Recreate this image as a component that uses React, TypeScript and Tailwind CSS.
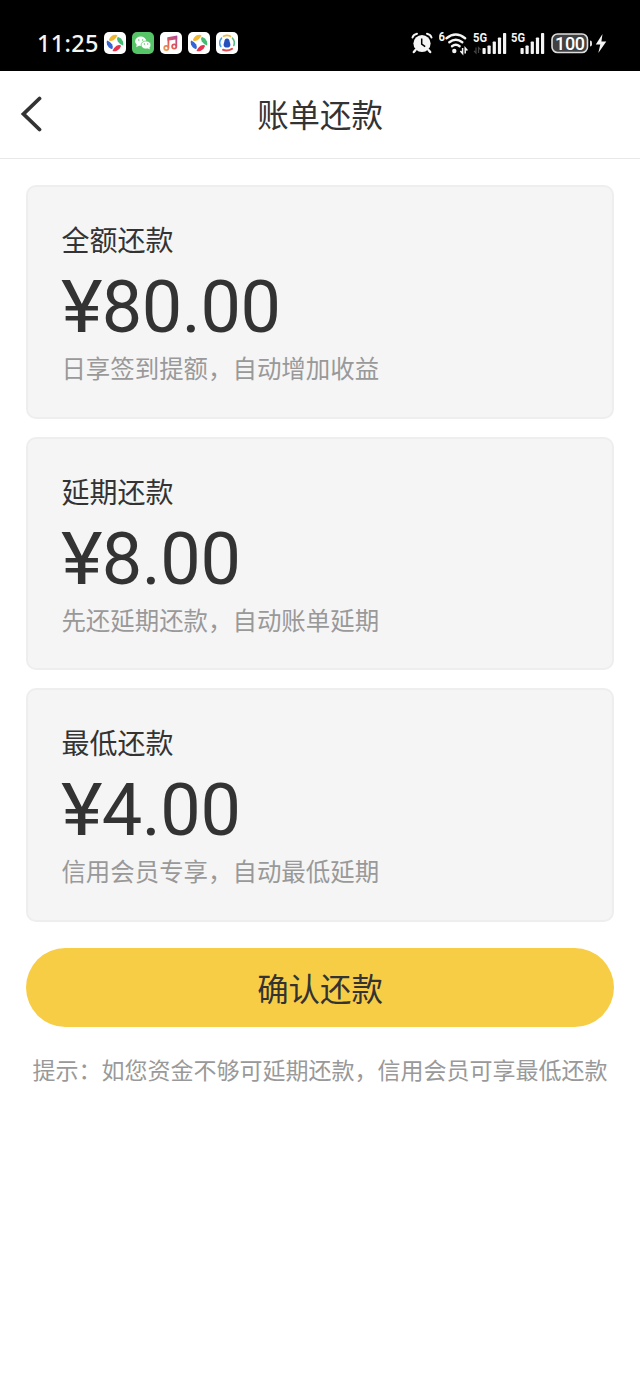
import React from "react";

interface RepayOption {
  title: string;
  amount: string;
  note: string;
}

const options: RepayOption[] = [
  { title: "全额还款", amount: "80.00", note: "日享签到提额，自动增加收益" },
  { title: "延期还款", amount: "8.00", note: "先还延期还款，自动账单延期" },
  { title: "最低还款", amount: "4.00", note: "信用会员专享，自动最低延期" },
];

function PinwheelIcon() {
  return (
    <svg className="h-[22px] w-[22px]" viewBox="0 0 22 22">
      <rect width="22" height="22" rx="5" fill="#fff" />
      <path d="M4.800 8.200Q6 4.300 9.500 3q3-.8 4 .2Q12.500 6 9.500 8.200q-3 1.500-4.700 0z" fill="#f0b62f" />
      <path d="M13.800 4.800Q17.700 6 19 9.500q.8 3-.2 4Q16 12.500 13.800 9.500q-1.500-3 0-4.700z" fill="#43bd72" />
      <path d="M17.200 13.800Q16 17.700 12.500 19q-3 .8-4-.2Q9.500 16 12.500 13.800q3-1.500 4.700 0z" fill="#e3354e" />
      <path d="M8.200 17.200Q4.300 16 3 12.500q-.8-3 .2-4Q6 9.500 8.200 12.500q1.500 3 0 4.700z" fill="#3566d6" />
    </svg>
  );
}

function ChatIcon() {
  return (
    <svg className="h-[22px] w-[22px]" viewBox="0 0 22 22">
      <rect width="22" height="22" rx="5" fill="#55c568" />
      <ellipse cx="8.700" cy="9.300" rx="5.600" ry="4.700" fill="#fff" />
      <path d="m4.800 12-.6 3.200 3.200-1.700z" fill="#fff" />
      <ellipse cx="14" cy="13" rx="4.900" ry="4" fill="#fff" stroke="#55c568" strokeWidth=".7" />
      <path d="m15.500 16 2.300 1.500-.5-2.600z" fill="#fff" />
      <circle cx="6.800" cy="8" r=".8" fill="#55c568" />
      <circle cx="10.600" cy="8" r=".8" fill="#55c568" />
      <circle cx="12.400" cy="12" r=".7" fill="#55c568" />
      <circle cx="15.700" cy="12" r=".7" fill="#55c568" />
    </svg>
  );
}

function MusicIcon() {
  return (
    <svg className="h-[22px] w-[22px]" viewBox="0 0 22 22">
      <defs>
        <linearGradient id="note" gradientUnits="userSpaceOnUse" x1="4" y1="18" x2="17" y2="4">
          <stop offset="0" stopColor="#f0a050" />
          <stop offset=".5" stopColor="#df5559" />
          <stop offset="1" stopColor="#ae4c9a" />
        </linearGradient>
      </defs>
      <rect width="22" height="22" rx="5" fill="#fff" />
      <path d="M7.500 5.200 17.200 3.600V7.200L7.500 8.800z" fill="url(#note)" />
      <g fill="none" stroke="url(#note)" strokeWidth="1.800">
        <path d="M8.400 15.800V5.500" />
        <path d="M16.300 14.300V4" />
        <circle cx="6.300" cy="16" r="2.100" />
        <circle cx="14.200" cy="14.500" r="2.100" />
      </g>
    </svg>
  );
}

function BrowserIcon() {
  return (
    <svg className="h-[22px] w-[22px]" viewBox="0 0 22 22">
      <rect width="22" height="22" rx="5" fill="#fff" />
      <g fill="none" strokeWidth="1.600" strokeLinecap="round">
        <path d="M4.800 14.500A7.300 7.300 0 0 1 5.500 6.200" stroke="#4d9de8" />
        <path d="M7.500 4.300A7.500 7.500 0 0 1 14.500 4.300" stroke="#eeb944" />
        <path d="M16.500 6.200A7.300 7.300 0 0 1 17.800 13.500" stroke="#59bd83" />
        <path d="M7 17.800Q11.500 19.500 16 16.800" stroke="#e34c50" strokeWidth="2" />
      </g>
      <path
        d="M11 6.500c1.900 0 2.500 1.500 2.700 3.300.2 1.200.7 1.900.7 3.100 0 1.600-1.500 2.600-3.400 2.600s-3.400-1-3.400-2.600c0-1.200.5-1.900.7-3.100.2-1.800.8-3.300 2.700-3.300z"
        fill="#2450bd"
      />
    </svg>
  );
}

function AlarmIcon() {
  return (
    <svg className="h-[22px] w-[22px]" viewBox="0 0 22 22">
      <circle cx="11" cy="11.500" r="8.600" fill="#f5f5f5" />
      <g fill="none" stroke="#f5f5f5" strokeWidth="2" strokeLinecap="round">
        <path d="M1.500 5.500Q2.500 2.500 6 1.700" />
        <path d="M20.500 5.500Q19.500 2.500 16 1.700" />
        <path d="m4.500 18-1.700 2M17.500 18l1.700 2" strokeWidth="2.400" />
      </g>
      <path d="M10.700 6.500V12l3.500 2.600" fill="none" stroke="#000" strokeWidth="1.500" />
    </svg>
  );
}

function WifiIcon() {
  return (
    <svg className="h-[26px] w-[30px]" viewBox="0 0 30 26">
      <text
        x="-.5"
        y="11"
        fill="#f5f5f5"
        fontSize="12.500"
        fontWeight="700"
        fontFamily="Roboto, sans-serif"
        textLength="6.500"
        lengthAdjust="spacingAndGlyphs"
      >
        6
      </text>
      <g fill="none" stroke="#f5f5f5" strokeWidth="2.400" strokeLinecap="round">
        <path d="M7.500 8.200Q16.800.8 26.100 8.200" />
        <path d="M10.300 12.300Q16.800 7.100 23.300 12.300" />
        <path d="M13 16.300Q16.800 13.200 20.600 16.300" />
      </g>
      <circle cx="15.300" cy="21" r="2.200" fill="#f5f5f5" />
      <path d="M23.600 18v5.500l-2.200-2.500M26.200 23.500V18l2.200 2.500" fill="none" stroke="#f5f5f5" strokeWidth="1.500" />
    </svg>
  );
}

function SignalIcon({ showTraffic = false }: { showTraffic?: boolean }) {
  return (
    <svg className="h-[26px] w-[34px]" viewBox="0 0 34 26">
      <text
        x="0"
        y="12"
        fill="#f5f5f5"
        fontSize="13.500"
        fontWeight="700"
        fontFamily="Roboto, sans-serif"
        textLength="14"
        lengthAdjust="spacingAndGlyphs"
      >
        5G
      </text>
      {showTraffic && (
        <path d="M3 17.500v5.500l-2-2.200M5.500 23v-5.500l2 2.200" fill="none" stroke="#444" strokeWidth="1.200" />
      )}
      <g fill="#f5f5f5">
        <rect x="9.500" y="18" width="3.200" height="6" rx=".8" />
        <rect x="14.500" y="15.500" width="3.200" height="8.500" rx=".8" />
        <rect x="19.700" y="11.500" width="3.200" height="12.500" rx=".8" />
        <rect x="24.900" y="7.500" width="3.200" height="16.500" rx=".8" />
        <rect x="30" y="3" width="3.200" height="21" rx=".8" />
      </g>
    </svg>
  );
}

function BatteryIcon() {
  return (
    <svg className="h-[26px] w-[56px]" viewBox="0 0 56 26">
      <rect x="1" y="4" width="35.500" height="18.500" rx="5.500" fill="#414141" stroke="#ddd" strokeWidth="1.600" />
      <text
        x="4"
        y="19.500"
        fill="#fff"
        fontSize="18"
        fontWeight="500"
        fontFamily="Roboto, sans-serif"
        textLength="30"
        lengthAdjust="spacing"
      >
        100
      </text>
      <path d="M39 10.500q2 0 2 2v2q0 2-2 2z" fill="#ddd" />
      <path d="M51.500 4 44.800 14.500h4.500L47.300 23l8-11.500h-4.900z" fill="#f5f5f5" />
    </svg>
  );
}

function StatusBar() {
  return (
    <div className="flex h-[70.5px] items-center justify-between bg-black pt-[15.5px] pr-[33px] pl-[37px]">
      <div className="flex items-center">
        <span className="w-[67px] font-['Noto_Sans',sans-serif] text-[23.5px] leading-[26px] font-medium tracking-[0.3px] text-[#f5f5f5]">
          11:25
        </span>
        <div className="flex gap-1.5">
          <PinwheelIcon />
          <ChatIcon />
          <MusicIcon />
          <PinwheelIcon />
          <BrowserIcon />
        </div>
      </div>
      <div className="flex items-center">
        <AlarmIcon />
        <div className="ml-1.5 flex">
          <WifiIcon />
        </div>
        <div className="ml-1 flex gap-1">
          <SignalIcon showTraffic />
          <SignalIcon />
        </div>
        <div className="ml-1.5 flex">
          <BatteryIcon />
        </div>
      </div>
    </div>
  );
}

function OptionCard({ title, amount, note }: RepayOption) {
  return (
    <div className="h-[233.5px] rounded-[10px] border-2 border-[#eeeeee] bg-[#f5f5f5] px-[33px] pt-[34px]">
      <h2 className="text-[28px] leading-9">{title}</h2>
      <p className="mt-[9px] flex font-[Roboto,sans-serif] text-[72px] leading-[84px]">
        <span className="mr-[2.5px] origin-left scale-x-110">¥</span>
        <span className="tracking-[-0.4px]">{amount}</span>
      </p>
      <p className="mt-px text-[24.45px] leading-[34px] text-[#999999]">{note}</p>
    </div>
  );
}

export default function App() {
  return (
    <div className="min-h-[1400px] w-[640px] bg-white font-['Noto_Sans_CJK_SC',sans-serif] text-[#333333]">
      <StatusBar />
      <header className="grid h-[88px] grid-cols-[80px_1fr_80px] items-center border-b border-[#e8e8e8]">
        <button className="pl-[19px]" aria-label="返回">
          <svg className="h-9 w-6" viewBox="0 0 24 36" fill="none" stroke="#333" strokeWidth="3.800">
            <path d="M20.500 2.500 4.500 18l16 15.500" strokeLinecap="round" />
          </svg>
        </button>
        <h1 className="text-center text-[31.4px] leading-[44px]">账单还款</h1>
      </header>
      <main className="px-[26.4px] pt-[26.5px]">
        <div className="flex flex-col gap-[18px]">
          {options.map((option) => (
            <OptionCard key={option.title} {...option} />
          ))}
        </div>
        <button className="mt-[26.5px] h-[79px] w-full rounded-full bg-[#f8cd46] text-[31.4px]">确认还款</button>
        <p className="mt-[25.5px] text-center text-[23px] leading-8 whitespace-nowrap text-[#999999]">
          提示：如您资金不够可延期还款，信用会员可享最低还款
        </p>
      </main>
    </div>
  );
}
